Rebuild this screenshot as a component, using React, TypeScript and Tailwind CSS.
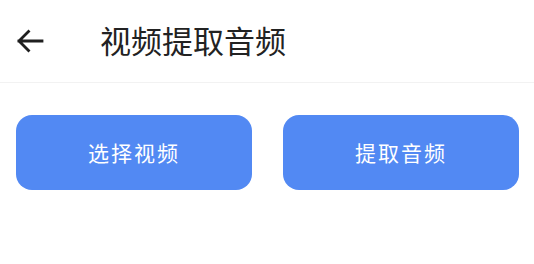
import React from "react";

export default function App() {
  return (
    <div
      className="w-[534px] h-[264px] bg-white flex flex-col"
      style={{ fontFamily: '"Noto Sans CJK SC", "Noto Sans", sans-serif' }}
    >
      <div className="h-[83px] border-b border-[#f2f2f2] flex items-center">
        <div className="w-[100px] pl-[16px] flex items-center -mt-[1px]">
          <svg width="28" height="24" viewBox="0 0 28 24" fill="none">
            <path
              d="M26 12H3M12.5 2.5L3 12l9.5 9.5"
              stroke="#1f1f1f"
              strokeWidth="2.8"
              strokeLinecap="square"
            />
          </svg>
        </div>
        <div className="text-[31px] leading-none text-[#222222] font-normal -mt-[4px]">
          视频提取音频
        </div>
      </div>
      <div className="flex gap-[31px] pl-[16px] pr-[15px] pt-[32px]">
        <button className="flex-1 h-[75px] rounded-[16px] bg-[#5289f3] text-white text-[21px] tracking-[2px] flex items-center justify-center">
          选择视频
        </button>
        <button className="flex-1 h-[75px] rounded-[16px] bg-[#5289f3] text-white text-[21px] tracking-[2px] flex items-center justify-center">
          提取音频
        </button>
      </div>
    </div>
  );
}
